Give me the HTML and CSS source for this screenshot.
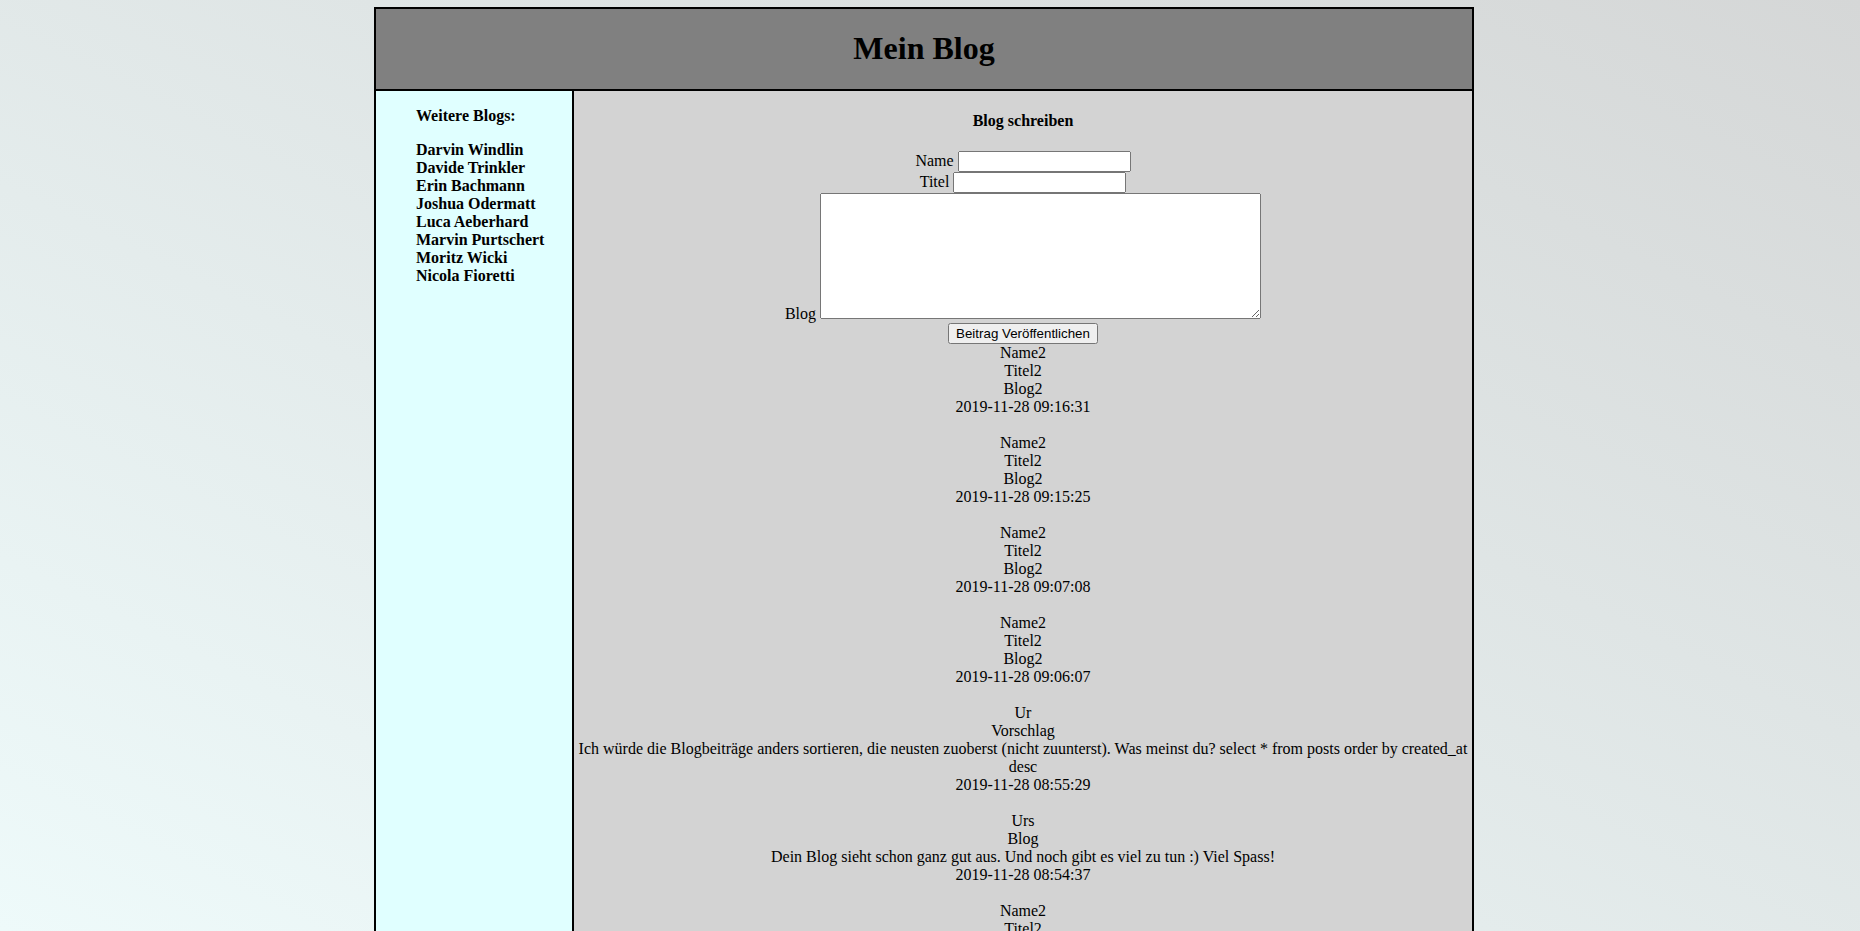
FILE: index.html
```html
<!DOCTYPE html>
<html lang="de">
<head>
<meta charset="utf-8">
<title>Mein Blog</title>
<link rel="stylesheet" href="styles.css">
</head>
<body>
<div class="page">
  <header class="masthead">
    <h1 class="masthead-title">Mein Blog</h1>
  </header>
  <aside class="sidebar">
    <p class="sidebar-title">Weitere Blogs:</p>
    <ul class="blog-list">
      <li><a href="#">Darvin Windlin</a></li>
      <li><a href="#">Davide Trinkler</a></li>
      <li><a href="#">Erin Bachmann</a></li>
      <li><a href="#">Joshua Odermatt</a></li>
      <li><a href="#">Luca Aeberhard</a></li>
      <li><a href="#">Marvin Purtschert</a></li>
      <li><a href="#">Moritz Wicki</a></li>
      <li><a href="#">Nicola Fioretti</a></li>
    </ul>
  </aside>
  <main class="content">
    <h4 class="form-title">Blog schreiben</h4>
    <form class="post-form" action="#">
      <label>Name <input class="field" type="text" name="name"></label><br>
      <label>Titel <input class="field" type="text" name="title"></label><br>
      <label>Blog <textarea class="field-area" name="text"></textarea></label><br>
      <button class="submit" type="button">Beitrag Veröffentlichen</button>
    </form>
    <div class="posts">
      <div class="post">
        <div>Name2</div><div>Titel2</div><div>Blog2</div><div>2019-11-28 09:16:31</div>
      </div>
      <div class="post">
        <div>Name2</div><div>Titel2</div><div>Blog2</div><div>2019-11-28 09:15:25</div>
      </div>
      <div class="post">
        <div>Name2</div><div>Titel2</div><div>Blog2</div><div>2019-11-28 09:07:08</div>
      </div>
      <div class="post">
        <div>Name2</div><div>Titel2</div><div>Blog2</div><div>2019-11-28 09:06:07</div>
      </div>
      <div class="post">
        <div>Ur</div><div>Vorschlag</div><div>Ich würde die Blogbeiträge anders sortieren, die neusten zuoberst (nicht zuunterst). Was meinst du? select * from posts order by created_at desc</div><div>2019-11-28 08:55:29</div>
      </div>
      <div class="post">
        <div>Urs</div><div>Blog</div><div>Dein Blog sieht schon ganz gut aus. Und noch gibt es viel zu tun :) Viel Spass!</div><div>2019-11-28 08:54:37</div>
      </div>
      <div class="post">
        <div>Name2</div><div>Titel2</div><div>Blog2</div><div>2019-11-28 08:50:12</div>
      </div>
      <div class="post">
        <div>Name2</div><div>Titel2</div><div>Blog2</div><div>2019-11-28 08:48:03</div>
      </div>
    </div>
  </main>
</div>
</body>
</html>
```

FILE: styles.css
```css
html {
  min-height: 100%;
  background: linear-gradient(to top right, #eefafa 0%, #d5d7d7 100%) fixed;
}

body {
  margin: 7px 12px 0 0;
  font-family: "Liberation Serif", "Times New Roman", serif;
  font-size: 16px;
  color: #000;
}

.page {
  width: 1096px;
  margin: 0 auto;
  border: 2px solid #000;
  display: grid;
  grid-template-columns: 198px 1fr;
  grid-template-rows: auto 1fr;
}

.masthead {
  grid-column: 1 / -1;
  background: #808080;
  border-bottom: 2px solid #000;
  text-align: center;
}

.masthead-title {
  margin: 21.44px 0;
  font-size: 32px;
  font-weight: bold;
}

.sidebar {
  background: #e0ffff;
  border-right: 2px solid #000;
  padding-left: 40px;
}

.sidebar-title {
  margin: 16px 0;
  font-weight: bold;
}

.blog-list {
  list-style: none;
  margin: 16px 0;
  padding: 0;
}

.blog-list a {
  color: #000;
  text-decoration: none;
  font-weight: bold;
}

.content {
  background: #d3d3d3;
  text-align: center;
  line-height: 18px;
}

.form-title {
  margin: 21.28px 0;
  font-size: 16px;
  line-height: normal;
}

.post-form {
  margin: 0;
  line-height: normal;
}

.field {
  box-sizing: border-box;
  width: 173px;
  height: 21px;
  font: 13.333px "Liberation Sans", Arial, sans-serif;
}

.field-area {
  box-sizing: border-box;
  width: 441px;
  height: 126px;
  font: 13.333px "Liberation Mono", monospace;
}

.submit {
  font: 13.333px "Liberation Sans", Arial, sans-serif;
}

.post {
  margin-bottom: 18px;
}
```
